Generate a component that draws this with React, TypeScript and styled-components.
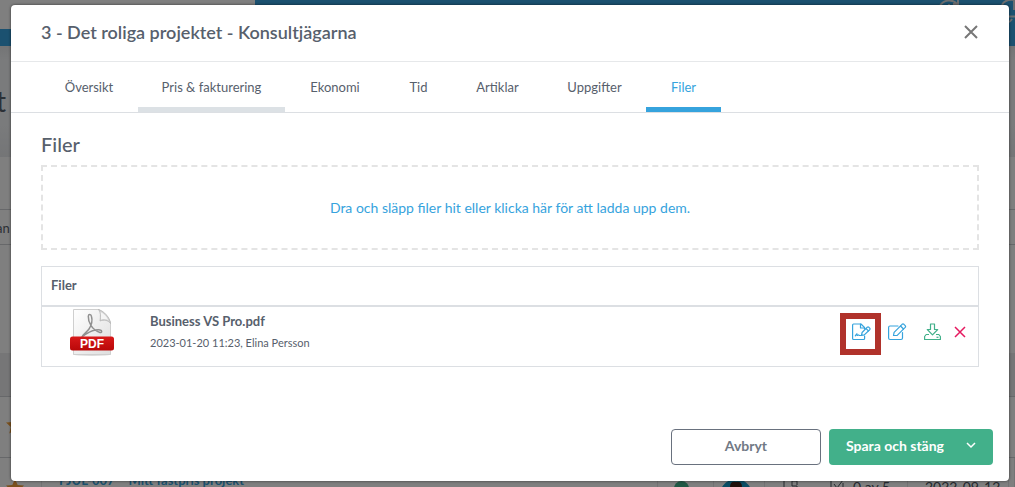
import React from 'react';
import styled, { createGlobalStyle, css } from 'styled-components';

const blue = '#36a3dd';
const green = '#42b08a';
const ink = '#57606c';
const line = '#dcdfe3';

const GlobalStyle = createGlobalStyle`
  * { box-sizing: border-box; }
  html, body { margin: 0; height: 100%; overflow: hidden; }
  body { font-family: Lato, "Open Sans", sans-serif; font-size: 13px; line-height: 16px; color: ${ink}; }
  button { font: inherit; cursor: pointer; }
`;

/* ---------- project list behind the dialog ---------- */

const Backpage = styled.div`
  position: fixed;
  inset: 0;
  overflow: hidden;
  background: #fff;
`;

const TopBar = styled.header`
  display: flex;
  height: 46px;
  background: #36a3e0;
`;

const Logo = styled.div`
  width: 255px;
  height: 29px;
  background: #fff;
`;

const TopIcons = styled.div`
  flex: 1;
  display: flex;
  justify-content: flex-end;
  gap: 40px;
  margin-right: -10px;
`;

const PageTitle = styled.div`
  height: 111px;
  padding-top: 38px;
  background: linear-gradient(#e8eaec 0, #f4f6f8 14px, #f4f6f8 80px, #e9ebee 111px);
  font-size: 28px;
  line-height: 34px;
  text-indent: -4px;
`;

const ListRow = styled.div<{ $height: number; $tint?: boolean; $line?: boolean }>`
  height: ${(p) => p.$height}px;
  padding-top: 10px;
  background: ${(p) => (p.$tint ? '#ededee' : '#fff')};
  border-bottom: ${(p) => (p.$line ? '1px solid #cfd1d4' : '0')};
  text-indent: -4px;
`;

const StarRow = styled(ListRow)`
  padding: 19px 0 0 6px;
  text-indent: 0;
`;

const ProjectRow = styled.div`
  display: flex;
  height: 61px;
  color: #4a525c;
`;

const Cell = styled.div<{ $width?: number; $pad?: number; $left?: number }>`
  flex: ${(p) => (p.$width ? `0 0 ${p.$width}px` : '1')};
  display: flex;
  align-items: flex-start;
  gap: 8px;
  padding: ${(p) => p.$pad ?? 23}px 0 0 ${(p) => p.$left ?? 17}px;
  border-right: 1px solid #e6e7e9;
  white-space: nowrap;
`;

const ProjectLink = styled.a`
  padding-left: 6px;
  color: ${blue};
  text-decoration: none;
  font-weight: 700;
`;

const ProjectNo = styled.b`
  color: ${blue};
`;

const ListText = styled.span`
  font-size: 14px;
`;

const Dot = styled.span`
  width: 15px;
  height: 15px;
  border-radius: 50%;
  background: ${green};
`;

/* ---------- dialog ---------- */

const Overlay = styled.div`
  position: fixed;
  inset: 0;
  padding: 5px 6px 6px 11px;
  background: rgba(0, 0, 0, 0.5);
`;

const Dialog = styled.section`
  display: flex;
  flex-direction: column;
  background: #fff;
  border-radius: 4px;
  box-shadow: 0 0 3px rgba(0, 0, 0, 0.6);
`;

const DialogHeader = styled.header`
  display: flex;
  align-items: center;
  justify-content: space-between;
  height: 57px;
  padding: 0 31px 2px 30px;
  border-bottom: 1px solid #e6e8ea;
`;

const Title = styled.h1`
  margin: 0;
  font-size: 18px;
  line-height: 22px;
  font-weight: 600;
`;

const IconButton = styled.button`
  display: flex;
  align-items: center;
  justify-content: center;
  padding: 0;
  border: 0;
  background: none;
`;

const Tabs = styled.nav`
  display: flex;
  padding-left: 29px;
  border-bottom: 1px solid ${line};
`;

const Tab = styled.button<{ $width: number; $state?: 'hover' | 'active' }>`
  width: ${(p) => p.$width}px;
  height: 50px;
  padding: 4px 0 0;
  border: 0;
  border-bottom: 5px solid transparent;
  background: none;
  color: ${ink};
  ${(p) => p.$state === 'hover' && css`border-bottom-color: #dce1e5;`}
  ${(p) => p.$state === 'active' && css`border-bottom-color: ${blue}; color: ${blue};`}
`;

const Content = styled.div`
  padding: 19px 30px 62px;
`;

const Heading = styled.h2`
  margin: 0 0 9px;
  font-size: 20px;
  line-height: 24px;
  font-weight: 500;
`;

const Dropzone = styled.label`
  display: flex;
  align-items: center;
  justify-content: center;
  height: 85px;
  border: 2px dashed #e4e4e4;
  color: ${blue};
  cursor: pointer;
  font-size: 14px;

  input { display: none; }
`;

const FileTable = styled.table`
  width: 100%;
  margin-top: 16px;
  border: 1px solid ${line};
  border-spacing: 0;

  th {
    height: 40px;
    padding: 0 9px 2px;
    border-bottom: 2px solid ${line};
    text-align: left;
    font-weight: 700;
  }
  td { height: 59px; padding: 0; vertical-align: top; }
`;

const FileCell = styled.td`
  width: 108px;

  svg { display: block; margin: 2px 0 0 28px; }
`;

const FileName = styled.div`
  padding-top: 6px;
  font-weight: 700;
`;

const FileMeta = styled.div`
  padding-top: 6px;
  font-size: 11px;
`;

const Actions = styled.div`
  display: flex;
  justify-content: flex-end;
  align-items: center;
  height: 50px;
  padding-right: 12px;
`;

const Action = styled(IconButton)<{ $gap?: number; $marked?: boolean }>`
  margin-left: ${(p) => p.$gap ?? 0}px;
  ${(p) => p.$marked && css`width: 41px; height: 42px; margin-top: 4px; padding: 0 0 4px 2px; border: 6px solid #b0322b;`}
`;

const Footer = styled.footer`
  display: flex;
  justify-content: flex-end;
  gap: 8px;
  padding: 0 16px 16px;
  font-size: 14px;
  font-weight: 700;
`;

const CancelButton = styled.button`
  width: 150px;
  height: 36px;
  padding: 0 0 2px;
  border: 1px solid #69717e;
  border-radius: 4px;
  background: #fff;
  color: #717985;
`;

const SaveGroup = styled.div`
  display: flex;
  border-radius: 4px;
  background: ${green};
  overflow: hidden;
`;

const SaveButton = styled.button`
  height: 36px;
  padding: 0 5px 2px 17px;
  border: 0;
  background: none;
  color: #fff;
`;

const SaveMenuButton = styled(SaveButton)`
  width: 44px;
  padding: 0 0 4px;
`;

/* ---------- icons ---------- */

const Cross = ({ size, color, width }: { size: number; color: string; width: number }) => (
  <svg width={size} height={size} viewBox={`0 0 ${size} ${size}`} fill="none" stroke={color} strokeWidth={width}>
    <path d={`M1 1L${size - 1} ${size - 1}M${size - 1} 1L1 ${size - 1}`} />
  </svg>
);

const Star = () => (
  <svg width="18" height="18" viewBox="0 0 18 18" fill="#f5a03a">
    <path d="M9 0l2.7 6 6.3.6-4.800 4.300 1.500 6.500L9 14l-5.700 3.400 1.500-6.500L0 6.600 6.300 6z" />
  </svg>
);

const PdfIcon = () => (
  <svg width="45" height="48" viewBox="0 0 45 48">
    <defs>
      <linearGradient id="paper" x1="0" y1="0" x2="1" y2="1">
        <stop offset="0" stopColor="#fff" />
        <stop offset="1" stopColor="#dedede" />
      </linearGradient>
      <linearGradient id="band" x1="0" y1="0" x2="0" y2="1">
        <stop offset="0" stopColor="#d8191a" />
        <stop offset="1" stopColor="#b90809" />
      </linearGradient>
    </defs>
    <ellipse cx="22" cy="45.500" rx="19" ry="1.500" fill="#ddd" />
    <path d="M3.500 .5H29Q37 5 40.500 13V45.500H3.500z" fill="url(#paper)" stroke="#cfcfcf" />
    <path d="M28.500 .5c2.500 3 2 7 1.500 11.500 4-1.500 8-1 10.500 2.500C39.500 8 34.500 2.500 28.500 .5z" fill="#d4d4d4" stroke="#b0b0b0" strokeWidth=".7" />
    <path d="M31 10.500c0-3 .2-5-.4-7.500 3.500 1.800 6 4.500 7.600 8-2-.9-4.500-1.200-7.200-.5z" fill="#f5f5f5" />
    <path d="M12 28c1-3 5-5 7-8 2.500-4 3.500-9 2.500-12.500-.5-2.500-3-2.500-3.200-.2C18 13 22 21 30 23.500c2 .5 2.500-2 0-2.500-5-.8-9 1-14 4z" fill="none" stroke="#909090" strokeWidth="1.500" />
    <rect x="0" y="27.500" width="44" height="14" rx="2.500" fill="url(#band)" />
    <text x="22" y="39" textAnchor="middle" fill="#fff" fontFamily="Liberation Sans, sans-serif" fontWeight="700" fontSize="12">PDF</text>
  </svg>
);

const SignIcon = () => (
  <svg width="19" height="18" viewBox="0 0 19 18" fill="none" stroke={blue} strokeWidth="1.200" strokeLinejoin="round" strokeLinecap="round">
    <path d="M12.500 6V4.500L9 1H1.500Q.6 1 .6 2v13.500q0 1 1 1h10q1 0 1-1V13" />
    <path d="M8.500 1v4h4" />
    <path d="M9.500 12.300l.6-2.800L15.300 4.200q.8-.6 1.600.1l.8.800q.7.800 0 1.600l-5.400 5.200z" />
    <path d="M14 5.500l2.400 2.400" />
    <path d="M3.300 12.800q2-3 1.700-1.500t.8.900 1.500.3h2.200" />
  </svg>
);

const EditIcon = () => (
  <svg width="19" height="18" viewBox="0 0 19 18" fill="none" stroke={blue} strokeWidth="1.200" strokeLinejoin="round" strokeLinecap="round">
    <path d="M10 3H2Q.6 3 .6 4.500V15q0 1.500 1.500 1.500H13q1.500 0 1.500-1.500V9.500" />
    <path d="M5.500 12.500l.6-3.200 8-8q.9-.7 1.800 0l1.300 1.300q.8.900 0 1.800l-8 8z" />
    <path d="M12.500 3l3 3" />
  </svg>
);

const DownloadIcon = () => (
  <svg width="17" height="18" viewBox="0 0 17 18" fill="none" stroke={green} strokeWidth="1.200" strokeLinejoin="round">
    <path d="M6.500 1h4v5.500h3.200L8.500 11.800 3.300 6.500h3.200z" />
    <path d="M5 11.500H2.200L.6 13.500v3h15.800v-3l-1.600-2H12" />
    <path d="M12.500 14.300H14.500" />
  </svg>
);

const Chevron = () => (
  <svg width="10" height="8" viewBox="0 0 10 8" fill="none" stroke="#fff" strokeWidth="1.500">
    <path d="M1 1l4 4 4-4" />
  </svg>
);

type TabDef = { label: string; width: number; state?: 'hover' | 'active' };

const tabs: TabDef[] = [
  { label: 'Översikt', width: 98 },
  { label: 'Pris & fakturering', width: 147, state: 'hover' },
  { label: 'Ekonomi', width: 100 },
  { label: 'Tid', width: 67 },
  { label: 'Artiklar', width: 91 },
  { label: 'Uppgifter', width: 103 },
  { label: 'Filer', width: 75, state: 'active' },
];

const ProjectList = () => (
  <Backpage aria-hidden="true">
    <TopBar>
      <Logo />
      <TopIcons>
        <svg width="24" height="24" viewBox="0 0 24 24" fill="none" stroke="#d8dde0" strokeWidth="2">
          <path d="M3 6a10.500 10.500 0 0 1 17-2M21 0v4h-5M12 4v6" />
        </svg>
        <svg width="24" height="24" viewBox="0 0 24 24" fill="none" stroke="#d8dde0" strokeWidth="2">
          <path d="M1 5q3-6 12-5v10M4 16.500h12M5 19q2 6 6 0" />
        </svg>
      </TopIcons>
    </TopBar>
    <PageTitle>t</PageTitle>
    <ListRow $height={53} $line />
    <ListRow $height={35} $line>an</ListRow>
    <ListRow $height={108} />
    <ListRow $height={44} $tint $line />
    <StarRow $height={61} $line><Star /></StarRow>
    <ProjectRow>
      <Cell $width={42} $left={6} $pad={21}><Star /></Cell>
      <Cell $pad={14}>
        <ProjectNo>PJUL-007</ProjectNo>
        <ProjectLink href="#">Mitt fastpris projekt</ProjectLink>
      </Cell>
      <Cell $width={56} $left={16}><Dot /></Cell>
      <Cell $width={51} $left={4}>
        <svg width="32" height="24" viewBox="0 0 32 24">
          <circle cx="18" cy="14" r="16" fill="#149bc8" />
          <path d="M12 6q0-6 6-5 6-1 6 5z" fill="#402018" />
        </svg>
      </Cell>
      <Cell $width={143} $left={18} $pad={21}>
        <svg width="16" height="20" viewBox="0 0 16 20" fill="none" stroke="#4a525c"><path d="M1 0v19M9 2v5h5v10M9 2h5v4" /></svg>
        <svg width="38" height="20" viewBox="0 0 38 20" fill="none" stroke="#4a525c"><path d="M24 0v19M27 5l3 4 6-8M36 4v14" /></svg>
        <ListText>0 av 5</ListText>
      </Cell>
      <Cell $width={101} $pad={21}><ListText>2022-09-12</ListText></Cell>
      <Cell $width={6} $left={0} />
    </ProjectRow>
  </Backpage>
);

export default function App() {
  return (
    <>
      <GlobalStyle />
      <ProjectList />
      <Overlay>
        <Dialog role="dialog" aria-labelledby="dialog-title">
          <DialogHeader>
            <Title id="dialog-title">3 - Det roliga projektet - Konsultjägarna</Title>
            <IconButton aria-label="Stäng">
              <Cross size={14} color="#777" width={2} />
            </IconButton>
          </DialogHeader>
          <Tabs>
            {tabs.map((t) => (
              <Tab key={t.label} $width={t.width} $state={t.state}>{t.label}</Tab>
            ))}
          </Tabs>
          <Content>
            <Heading>Filer</Heading>
            <Dropzone>
              <input type="file" multiple />
              Dra och släpp filer hit eller klicka här för att ladda upp dem.
            </Dropzone>
            <FileTable>
              <thead>
                <tr><th colSpan={3}>Filer</th></tr>
              </thead>
              <tbody>
                <tr>
                  <FileCell><PdfIcon /></FileCell>
                  <td>
                    <FileName>Business VS Pro.pdf</FileName>
                    <FileMeta>2023-01-20 11:23, Elina Persson</FileMeta>
                  </td>
                  <td>
                    <Actions>
                      <Action $marked aria-label="Signera"><SignIcon /></Action>
                      <Action $gap={7} aria-label="Redigera"><EditIcon /></Action>
                      <Action $gap={17} aria-label="Ladda ner"><DownloadIcon /></Action>
                      <Action $gap={13} aria-label="Ta bort"><Cross size={12} color="#e5195f" width={1.5} /></Action>
                    </Actions>
                  </td>
                </tr>
              </tbody>
            </FileTable>
          </Content>
          <Footer>
            <CancelButton>Avbryt</CancelButton>
            <SaveGroup>
              <SaveButton>Spara och stäng</SaveButton>
              <SaveMenuButton aria-label="Fler val"><Chevron /></SaveMenuButton>
            </SaveGroup>
          </Footer>
        </Dialog>
      </Overlay>
    </>
  );
}
